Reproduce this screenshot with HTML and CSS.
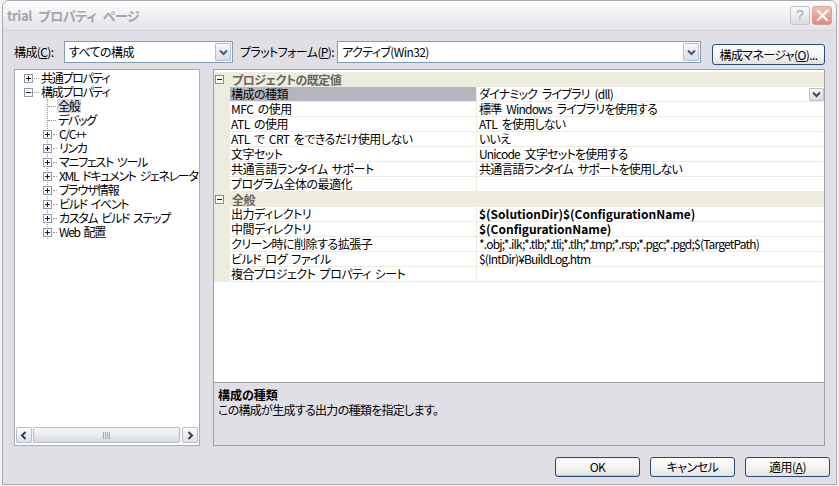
FILE: index.html
```html
<!DOCTYPE html>
<html lang="ja">
<head>
<meta charset="utf-8">
<title>trial プロパティ ページ</title>
<link rel="stylesheet" href="styles.css">
</head>
<body>
<div class="window">
  <div class="titlebar">
    <span class="title">trial プロパティ ページ</span>
    <div class="tb-btns">
      <span class="tb-help">?</span>
      <span class="tb-close"><svg width="13" height="13" viewBox="0 0 13 13"><path d="M2 2 L11 11 M11 2 L2 11" stroke="#fff" stroke-width="2.2" stroke-linecap="square"/></svg></span>
    </div>
  </div>
  <div class="content">
    <div class="toprow">
      <span class="lab lab1">構成(<u>C</u>):</span>
      <div class="combo combo1"><span class="ctext">すべての構成</span><span class="dd"><svg width="9" height="7" viewBox="0 0 9 7"><path d="M1 1.5 L4.5 5 L8 1.5" fill="none" stroke="#4a5a78" stroke-width="2"/></svg></span></div>
      <span class="lab lab2">プラットフォーム(<u>P</u>):</span>
      <div class="combo combo2"><span class="ctext">アクティブ(Win32)</span><span class="dd"><svg width="9" height="7" viewBox="0 0 9 7"><path d="M1 1.5 L4.5 5 L8 1.5" fill="none" stroke="#4a5a78" stroke-width="2"/></svg></span></div>
      <button class="btn mgr">構成マネージャ(<u>O</u>)...</button>
    </div>
    <div class="main">
      <div class="tree">
        <div class="tree-items">
          <div class="ti"><span class="box plus"></span><span class="hdots"></span><span class="lbl">共通プロパティ</span></div>
          <div class="ti"><span class="box minus"></span><span class="hdots"></span><span class="lbl">構成プロパティ</span></div>
          <div class="kids">
            <div class="ti leaf"><span class="hdots"></span><span class="lbl sel">全般</span></div>
            <div class="ti leaf"><span class="hdots"></span><span class="lbl">デバッグ</span></div>
            <div class="ti sub"><span class="box plus"></span><span class="hdots"></span><span class="lbl">C/C++</span></div>
            <div class="ti sub"><span class="box plus"></span><span class="hdots"></span><span class="lbl">リンカ</span></div>
            <div class="ti sub"><span class="box plus"></span><span class="hdots"></span><span class="lbl">マニフェスト ツール</span></div>
            <div class="ti sub"><span class="box plus"></span><span class="hdots"></span><span class="lbl">XML ドキュメント ジェネレータ</span></div>
            <div class="ti sub"><span class="box plus"></span><span class="hdots"></span><span class="lbl">ブラウザ情報</span></div>
            <div class="ti sub"><span class="box plus"></span><span class="hdots"></span><span class="lbl">ビルド イベント</span></div>
            <div class="ti sub"><span class="box plus"></span><span class="hdots"></span><span class="lbl">カスタム ビルド ステップ</span></div>
            <div class="ti sub"><span class="box plus"></span><span class="hdots"></span><span class="lbl">Web 配置</span></div>
          </div>
        </div>
        <div class="hscroll">
          <span class="sbtn"><svg width="8" height="9" viewBox="0 0 8 9"><path d="M5.5 1 L2 4.5 L5.5 8" fill="none" stroke="#3c3c50" stroke-width="2"/></svg></span>
          <span class="thumb"><svg width="9" height="7" viewBox="0 0 9 7"><path d="M1.5 0v7M3.5 0v7M5.5 0v7M7.5 0v7" stroke="#a4a8b8" stroke-width="1"/></svg></span>
          <span class="sbtn"><svg width="8" height="9" viewBox="0 0 8 9"><path d="M2.5 1 L6 4.5 L2.5 8" fill="none" stroke="#3c3c50" stroke-width="2"/></svg></span>
        </div>
      </div>
      <div class="right">
        <div class="grid">
          <div class="cat"><span class="box minus gbox"></span><span class="cattext">プロジェクトの既定値</span></div>
          <div class="row"><span class="gut"></span><span class="name selname">構成の種類</span><span class="val"><span>ダイナミック ライブラリ (dll)</span><span class="vdd"><svg width="9" height="7" viewBox="0 0 9 7"><path d="M1 1.5 L4.5 5 L8 1.5" fill="none" stroke="#3c4660" stroke-width="2"/></svg></span></span></div>
          <div class="row"><span class="gut"></span><span class="name">MFC の使用</span><span class="val">標準 Windows ライブラリを使用する</span></div>
          <div class="row"><span class="gut"></span><span class="name">ATL の使用</span><span class="val">ATL を使用しない</span></div>
          <div class="row"><span class="gut"></span><span class="name">ATL で CRT をできるだけ使用しない</span><span class="val">いいえ</span></div>
          <div class="row"><span class="gut"></span><span class="name">文字セット</span><span class="val">Unicode 文字セットを使用する</span></div>
          <div class="row"><span class="gut"></span><span class="name">共通言語ランタイム サポート</span><span class="val">共通言語ランタイム サポートを使用しない</span></div>
          <div class="row"><span class="gut"></span><span class="name">プログラム全体の最適化</span><span class="val"></span></div>
          <div class="cat"><span class="box minus gbox"></span><span class="cattext">全般</span></div>
          <div class="row"><span class="gut"></span><span class="name">出力ディレクトリ</span><span class="val bold">$(SolutionDir)$(ConfigurationName)</span></div>
          <div class="row"><span class="gut"></span><span class="name">中間ディレクトリ</span><span class="val bold">$(ConfigurationName)</span></div>
          <div class="row"><span class="gut"></span><span class="name">クリーン時に削除する拡張子</span><span class="val">*.obj;*.ilk;*.tlb;*.tli;*.tlh;*.tmp;*.rsp;*.pgc;*.pgd;$(TargetPath)</span></div>
          <div class="row"><span class="gut"></span><span class="name">ビルド ログ ファイル</span><span class="val">$(IntDir)¥BuildLog.htm</span></div>
          <div class="row"><span class="gut"></span><span class="name">複合プロジェクト プロパティ シート</span><span class="val"></span></div>
        </div>
        <div class="desc">
          <div class="desc-title">構成の種類</div>
          <div class="desc-text">この構成が生成する出力の種類を指定します。</div>
        </div>
      </div>
    </div>
    <div class="buttons">
      <button class="btn dlg default">OK</button>
      <button class="btn dlg">キャンセル</button>
      <button class="btn dlg">適用(<u>A</u>)</button>
    </div>
  </div>
</div>
</body>
</html>
```

FILE: styles.css
```css
html, body {
  margin: 0;
  padding: 0;
}
body {
  width: 839px;
  height: 486px;
  overflow: hidden;
  background: #f3f3f5;
  font-family: "Noto Sans CJK JP", "Liberation Sans", sans-serif;
  font-size: 12px;
  line-height: 14px;
  font-feature-settings: "palt";
  color: #000;
}
.window {
  box-sizing: border-box;
  width: 835px;
  height: 485px;
  margin-left: 2px;
  border: 1px solid #a9a8b0;
  border-radius: 7px 7px 0 0;
  background: #e0dfe5;
  display: flex;
  flex-direction: column;
  overflow: hidden;
}
.titlebar {
  height: 29px;
  flex: none;
  display: flex;
  align-items: center;
  justify-content: space-between;
  background: linear-gradient(#fefefe, #f1f1f4 45%, #e3e3e8);
  border-bottom: 1px solid #d2d2d8;
  padding: 0 4px 0 4px;
}
.title {
  font-size: 13px;
  font-weight: bold;
  color: #a4a4ac;
  letter-spacing: -0.4px;
  word-spacing: 4px;
}
.tb-btns {
  display: flex;
  gap: 2px;
  margin-top: -1px;
}
.tb-help, .tb-close {
  box-sizing: border-box;
  width: 20px;
  height: 19px;
  border-radius: 3px;
  display: flex;
  align-items: center;
  justify-content: center;
}
.tb-help {
  border: 1px solid #c2c2ca;
  background: linear-gradient(#fbfbfc, #dcdce2);
  color: #a6a6b0;
  font-family: "Liberation Sans", sans-serif;
  font-size: 14px;
}
.tb-close {
  border: 1px solid #d9a296;
  background: linear-gradient(#f2c2b6, #dc8a78);
}
.content {
  flex: 1;
  display: flex;
  flex-direction: column;
  padding: 0 11px 0 11px;
}
.toprow {
  display: flex;
  align-items: flex-start;
  margin-top: 10px;
  height: 22px;
  letter-spacing: -0.6px;
}
.lab {
  line-height: 22px;
  white-space: nowrap;
  flex: none;
}
.lab1 { width: 50px; }
.lab2 { margin-left: 7px; margin-right: 3px; }
.combo {
  box-sizing: border-box;
  height: 22px;
  border: 1px solid #7f9db9;
  background: #fff;
  display: flex;
  align-items: center;
  justify-content: space-between;
  padding: 1px;
}
.combo1 { width: 169px; flex: none; }
.combo2 { flex: 1; margin-right: 11px; }
.ctext { padding-left: 3px; white-space: nowrap; }
.dd {
  box-sizing: border-box;
  width: 16px;
  height: 18px;
  border: 1px solid #b9c0cf;
  border-radius: 1px;
  background: linear-gradient(#f6f7fa, #d9dce6);
  display: flex;
  align-items: center;
  justify-content: center;
  flex: none;
}
.btn {
  font: inherit;
  font-feature-settings: "palt";
  box-sizing: border-box;
  border: 1px solid #264c7e;
  border-radius: 3px;
  background: linear-gradient(#ffffff, #f3f3ef 60%, #e2e2dc);
  padding: 0;
  color: #000;
  display: flex;
  align-items: center;
  justify-content: center;
  white-space: nowrap;
}
.mgr {
  width: 113px;
  height: 21px;
  margin-top: 3px;
  flex: none;
  letter-spacing: -0.6px;
}
.main {
  display: flex;
  margin-top: 6px;
  height: 377px;
  gap: 13px;
}
.tree {
  box-sizing: border-box;
  width: 186px;
  height: 377px;
  border: 1px solid #a5acb5;
  background: #fff;
  display: flex;
  flex-direction: column;
  overflow: hidden;
  flex: none;
}
.tree-items {
  flex: 1;
  padding-top: 1px;
  letter-spacing: -1.3px;
  word-spacing: 2.5px;
}
.ti {
  height: 14px;
  display: flex;
  align-items: center;
  padding-left: 9px;
  white-space: nowrap;
}
.box {
  box-sizing: border-box;
  width: 9px;
  height: 9px;
  flex: none;
  border: 1px solid #8d99ad;
  background: #fff;
}
.box.plus {
  background:
    linear-gradient(#1a1a1a, #1a1a1a) center / 5px 1px no-repeat,
    linear-gradient(#1a1a1a, #1a1a1a) center / 1px 5px no-repeat,
    #fff;
}
.box.minus {
  background:
    linear-gradient(#1a1a1a, #1a1a1a) center / 5px 1px no-repeat,
    #fff;
}
.hdots {
  width: 5px;
  height: 0;
  border-top: 1px dotted #9a9a9a;
  margin: 0 1px 0 1px;
  flex: none;
}
.lbl {
  padding: 0 1px;
  line-height: 14px;
}
.lbl.sel {
  background: #dcdce0;
  padding: 0 2px 0 1px;
}
.kids {
  margin-left: 32px;
  border-left: 1px dotted #9a9a9a;
  margin-bottom: 7px;
}
.ti.leaf {
  padding-left: 0;
}
.ti.leaf .hdots {
  width: 8px;
  margin: 0 1px 0 0;
}
.ti.sub {
  padding-left: 0;
  margin-left: -5px;
}
.ti.sub .hdots {
  width: 4px;
  margin: 0 1px 0 1px;
}
.hscroll {
  height: 16px;
  margin: 0 1px 2px 1px;
  display: flex;
  background: #f8f8fa;
}
.sbtn {
  box-sizing: border-box;
  width: 16px;
  height: 16px;
  border: 1px solid #b8bccb;
  border-radius: 2px;
  background: linear-gradient(#fdfdfe, #dfe1ea);
  display: flex;
  align-items: center;
  justify-content: center;
  flex: none;
}
.thumb {
  box-sizing: border-box;
  flex: 1;
  margin: 0 2px 0 1px;
  height: 16px;
  border: 1px solid #b8bccb;
  border-radius: 2px;
  background: linear-gradient(#f7f8fb, #e6e8ef 60%, #d6d9e3);
  display: flex;
  align-items: center;
  justify-content: center;
}
.right {
  width: 612px;
  display: flex;
  flex-direction: column;
  flex: none;
}
.grid {
  box-sizing: border-box;
  height: 314px;
  border: 1px solid #a0a0a4;
  background: #fff;
  padding-top: 2px;
}
.cat {
  height: 15px;
  display: flex;
  align-items: center;
  background: #edecdf;
}
.gbox {
  margin-left: 1px;
  border-color: #8a8a8a;
}
.cattext {
  margin-left: 8px;
  font-weight: bold;
  color: #66665e;
  letter-spacing: -0.5px;
}
.row {
  display: grid;
  grid-template-columns: 16px 247px 1fr;
  height: 15px;
}
.gut {
  background: #edecdf;
}
.name, .val {
  box-sizing: border-box;
  height: 15px;
  line-height: 14px;
  border-bottom: 1px solid #edecdf;
  white-space: nowrap;
}
.name {
  border-right: 1px solid #edecdf;
  padding-left: 1px;
  letter-spacing: -0.5px;
  word-spacing: 2px;
}
.selname {
  background: #b6b5bf;
}
.val {
  padding-left: 2px;
  display: flex;
  justify-content: space-between;
  align-items: center;
  letter-spacing: -0.8px;
  word-spacing: 3px;
}
.val.bold {
  font-weight: bold;
  letter-spacing: 0;
}
.vdd {
  box-sizing: border-box;
  width: 15px;
  height: 13px;
  border: 1px solid #b9c0cf;
  border-radius: 1px;
  background: linear-gradient(#f8f9fb, #d8dbe5);
  display: flex;
  align-items: center;
  justify-content: center;
  margin-top: 1px;
  flex: none;
}
.desc {
  box-sizing: border-box;
  height: 63px;
  border: 1px solid #a0a0a4;
  border-top: none;
  padding: 4px 4px 0 4px;
  line-height: 15px;
}
.desc-title {
  font-weight: bold;
}
.desc-text {
  letter-spacing: -0.7px;
}
.buttons {
  display: flex;
  justify-content: flex-end;
  gap: 10px;
  margin-top: 11px;
  margin-right: -5px;
}
.dlg {
  width: 85px;
  height: 20px;
  letter-spacing: -0.5px;
}
.dlg.default {
  border-color: #1f4a86;
  box-shadow: inset 0 -1px 0 #a9c3ee, inset 0 1px 0 #e8f0fc;
}
```
